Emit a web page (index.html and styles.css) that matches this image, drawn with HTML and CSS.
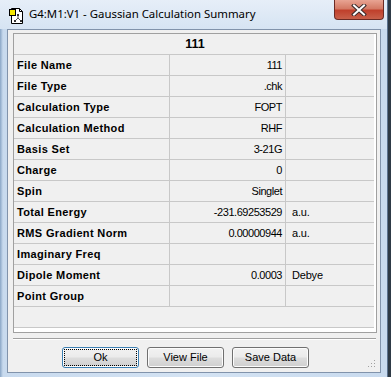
FILE: index.html
```html
<html>
<head>
<meta charset="utf-8">
<title>G4:M1:V1 - Gaussian Calculation Summary</title>
<link rel="stylesheet" href="styles.css">
</head>
<body>
<div class="window">
	<div class="titlebar">
		<svg class="appicon" width="16" height="16" viewBox="0 0 16 16">
			<path d="M2.5 0.5h8l3 3v12h-11z" fill="#fff" stroke="#000"/>
			<path d="M10.5 0.5v3h3" fill="none" stroke="#000"/>
			<rect x="0.5" y="1.5" width="6" height="6" fill="#f4e600" stroke="#000"/>
			<path d="M9 7v3M9 10l-3 3M9 10l3 3" stroke="#555" fill="none"/>
			<rect x="8" y="6" width="2" height="2" fill="#333"/>
			<rect x="5" y="12" width="2" height="2" fill="#333"/>
			<rect x="11" y="12" width="2" height="2" fill="#333"/>
		</svg>
		<span class="title">G4:M1:V1 - Gaussian Calculation Summary</span>
		<div class="close">
			<svg width="16" height="12" viewBox="0 0 16 12">
				<path d="M3 1.5l10 9M13 1.5l-10 9" stroke="#3a2a2a" stroke-width="4" stroke-linecap="square"/>
				<path d="M3 1.5l10 9M13 1.5l-10 9" stroke="#fff" stroke-width="2" stroke-linecap="square"/>
			</svg>
		</div>
	</div>
	<div class="client">
		<div class="grid">
			<div class="head">111</div>

			<div class="label">File Name</div><div class="value">111</div><div class="unit"></div>
			<div class="label">File Type</div><div class="value">.chk</div><div class="unit"></div>
			<div class="label">Calculation Type</div><div class="value">FOPT</div><div class="unit"></div>
			<div class="label">Calculation Method</div><div class="value">RHF</div><div class="unit"></div>
			<div class="label">Basis Set</div><div class="value">3-21G</div><div class="unit"></div>
			<div class="label">Charge</div><div class="value">0</div><div class="unit"></div>
			<div class="label">Spin</div><div class="value">Singlet</div><div class="unit"></div>
			<div class="label">Total Energy</div><div class="value">-231.69253529</div><div class="unit">a.u.</div>
			<div class="label">RMS Gradient Norm</div><div class="value">0.00000944</div><div class="unit">a.u.</div>
			<div class="label">Imaginary Freq</div><div class="value"></div><div class="unit"></div>
			<div class="label">Dipole Moment</div><div class="value">0.0003</div><div class="unit">Debye</div>
			<div class="label">Point Group</div><div class="value"></div><div class="unit"></div>
			<div class="blank"></div>
		</div>
		<div class="separator"></div>
		<div class="buttons">
			<button class="btn default"><span>Ok</span></button>
			<button class="btn"><span>View File</span></button>
			<button class="btn"><span>Save Data</span></button>
		</div>
		<svg class="grip" width="8" height="8" viewBox="0 0 8 8">
			<rect x="6" y="0" width="1" height="1" fill="#a0a0a0"/>
			<rect x="3" y="3" width="1" height="1" fill="#a0a0a0"/>
			<rect x="6" y="3" width="1" height="1" fill="#a0a0a0"/>
			<rect x="0" y="6" width="1" height="1" fill="#a0a0a0"/>
			<rect x="3" y="6" width="1" height="1" fill="#a0a0a0"/>
			<rect x="6" y="6" width="1" height="1" fill="#a0a0a0"/>
		</svg>
	</div>
</div>
</body>
</html>
```

FILE: styles.css
```css
body{
	margin:0;
	background:#2e3a46;
	font-family:"Liberation Sans", Arial, sans-serif;
	font-size:11px;
	color:#000;
}
.window{
	width:388px;
	height:377px;
	box-sizing:border-box;
	display:flex;
	flex-direction:column;
	background:linear-gradient(to right, #8aa6c6 0px, #c8daee 3px, #d4e3f3 50%, #c8daee 100%);
	border-right:1px solid #5c7390;
}
.titlebar{
	height:29px;
	display:flex;
	align-items:flex-start;
	background:linear-gradient(#e6eef8, #d6e4f3);
}
.appicon{
	margin:8px 0 0 9px;
}
.title{
	margin:6px 0 0 4px;
	font-family:"Noto Sans", "Open Sans", sans-serif;
	font-size:11.4px;
	line-height:16px;
	color:#000;
}
.close{
	margin-left:auto;
	margin-right:3px;
	width:48px;
	height:19px;
	display:flex;
	align-items:center;
	justify-content:center;
	border:1px solid #6b2a24;
	border-top:none;
	border-radius:0 0 4px 4px;
	background:linear-gradient(#e8a493 0%, #d47a65 45%, #c0402c 55%, #c8604a 100%);
}
.client{
	position:relative;
	flex:1;
	margin:0 6px 4px 7px;
	padding:3px 5px 0 5px;
	background:#f0f0f0;
	border:1px solid #8193ab;
}
.grid{
	display:grid;
	grid-template-columns:156px 116px 88px;
	grid-auto-rows:21px;
	width:364px;
	padding-bottom:4px;
	border:1px solid #a0a0a0;
	background:#fff;
	box-sizing:border-box;
}
.grid > div{
	background:#f0f0f0;
	border-bottom:1px solid #c8c8c8;
	line-height:20px;
	white-space:nowrap;
}
.grid .head{
	grid-column:1 / 4;
	text-align:center;
	font-weight:bold;
	font-size:12.5px;
	padding-left:2px;
}
.grid .label{
	font-weight:bold;
	letter-spacing:0.35px;
	padding-left:3px;
	border-right:1px solid #c8c8c8;
}
.grid .value{
	text-align:right;
	letter-spacing:-0.45px;
	padding-right:3px;
	border-right:1px solid #c8c8c8;
}
.grid .unit{
	padding-left:6px;
	letter-spacing:-0.2px;
}
.grid .blank{
	grid-column:1 / 4;
}
.separator{
	margin:5px 0 0 0;
	width:363px;
	border-top:1px solid #a0a0a0;
	border-bottom:1px solid #fff;
}
.buttons{
	display:flex;
	gap:8px;
	margin:7px 0 0 49px;
}
.btn{
	width:77px;
	height:21px;
	padding:0;
	font-family:"Liberation Sans", Arial, sans-serif;
	font-size:11px;
	color:#000;
	border:1px solid #707070;
	border-radius:3px;
	background:linear-gradient(#f2f2f2 0%, #ebebeb 48%, #dddddd 52%, #cfcfcf 100%);
	box-shadow:inset 0 0 0 1px #fcfcfc;
}
.btn span{
	display:block;
	margin:2px;
	line-height:15px;
}
.btn.default{
	border-color:#3c7fb1;
}
.btn.default span{
	outline:1px dotted #000;
}
.grip{
	position:absolute;
	right:4px;
	bottom:4px;
}
```
